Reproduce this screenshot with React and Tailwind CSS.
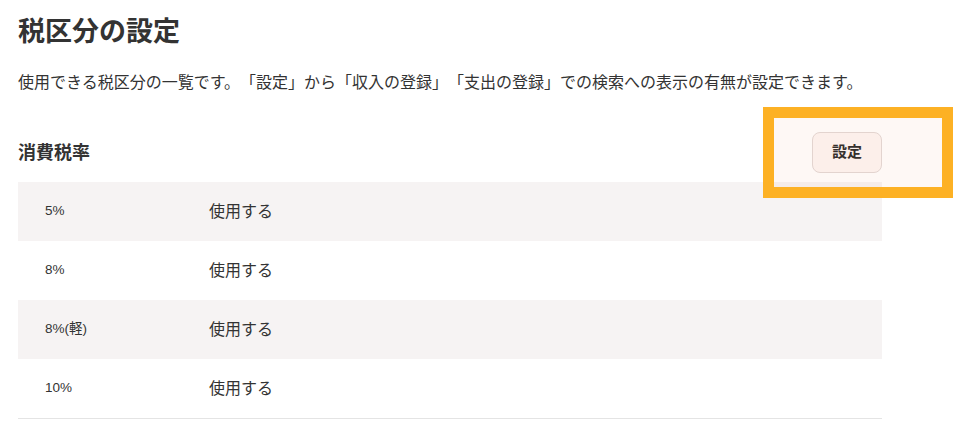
import React from 'react';

const rates = [
    { label: '5%', status: '使用する' },
    { label: '8%', status: '使用する' },
    { label: '8%(軽)', status: '使用する' },
    { label: '10%', status: '使用する' },
];

const TaxSettings = () => {
    return (
        <div
            className="relative min-h-screen bg-white text-[#333] [text-spacing-trim:space-all]"
            style={{ fontFamily: '"Liberation Sans", "Noto Sans CJK JP", sans-serif' }}
        >
            <div className="w-[882px] pl-[18px]">
                <h1 className="pt-[14px] text-[27px] font-bold leading-[36px]">税区分の設定</h1>
                <p className="mt-[21px] text-[16px] leading-[24px] whitespace-nowrap">
                    使用できる税区分の一覧です。「設定」から「収入の登録」「支出の登録」での検索への表示の有無が設定できます。
                </p>

                <div className="mt-[37px] flex items-center justify-between">
                    <h2 className="text-[18px] font-bold leading-[24px]">消費税率</h2>
                    <button className="h-[41px] w-[70px] rounded-[8px] border border-[#e3d9d7] bg-[#fdf6f4] text-[15px] font-bold text-[#2b2b2b]">
                        設定
                    </button>
                </div>

                <div className="mt-[9px] border-b border-[#e4e4e4]">
                    {rates.map((rate, i) => (
                        <div
                            key={rate.label}
                            className={`grid h-[59px] grid-cols-[191px_1fr] items-center ${i % 2 === 0 ? 'bg-[#f6f3f3]' : 'bg-white'}`}
                        >
                            <span className="pl-[27px] text-[13.5px]">{rate.label}</span>
                            <span className="text-[16px]">{rate.status}</span>
                        </div>
                    ))}
                </div>
            </div>

            {/* highlight around the settings button */}
            <div className="pointer-events-none absolute left-[763px] top-[107px] h-[91px] w-[190px] border-[11px] border-[#fdb124] bg-[#f0845a]/[0.06]" />
        </div>
    );
};

export default TaxSettings;
